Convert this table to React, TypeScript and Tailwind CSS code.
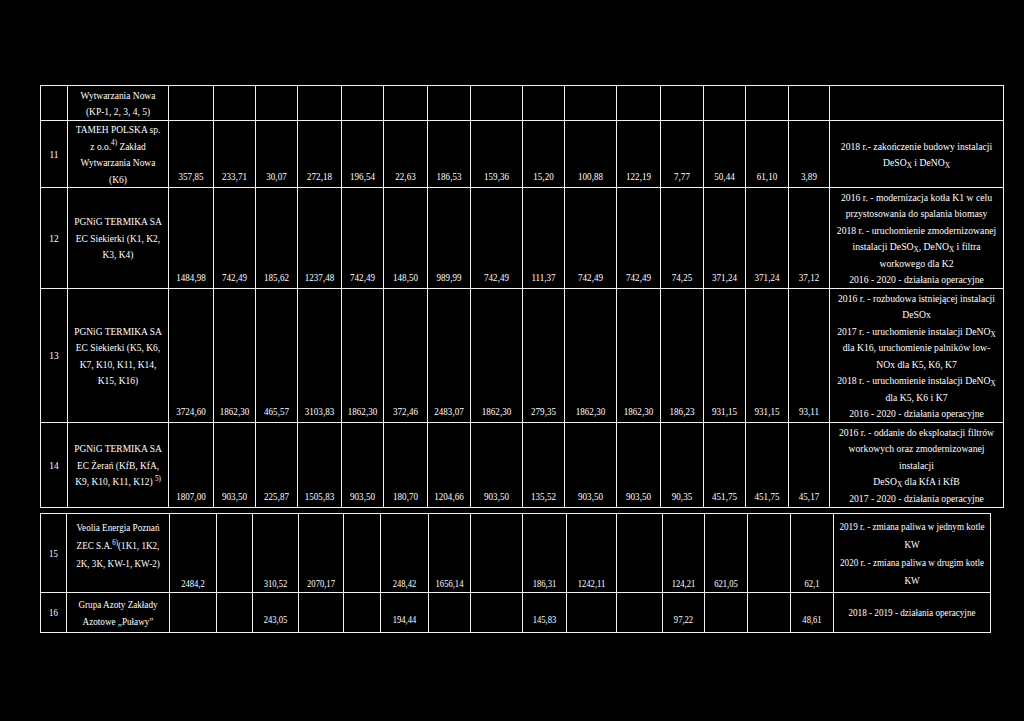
import type { ReactNode } from "react";

type Line = ReactNode;

const X = <sub>X</sub>;

const topCols = [
  "w-[27px]", "w-[101px]", "w-[45px]", "w-[42px]", "w-[42px]", "w-[44px]",
  "w-[42px]", "w-[44px]", "w-[43px]", "w-[52px]", "w-[42px]", "w-[52px]",
  "w-[44px]", "w-[43px]", "w-[42px]", "w-[43px]", "w-[41px]", "w-[174px]",
];

const bottomCols = [
  "w-[26px]", "w-[103px]", "w-[47px]", "w-[36px]", "w-[46px]", "w-[45px]",
  "w-[37px]", "w-[48px]", "w-[42px]", "w-[52px]", "w-[44px]", "w-[50px]",
  "w-[46px]", "w-[42px]", "w-[43px]", "w-[43px]", "w-[43px]", "w-[157px]",
];

const topRows: { lp: string; h: string; name: Line[]; nums: string[]; desc: Line[] }[] = [
  {
    lp: "",
    h: "h-[35px]",
    name: ["Wytwarzania Nowa", "(KP-1, 2, 3, 4, 5)"],
    nums: Array(15).fill(""),
    desc: [],
  },
  {
    lp: "11",
    h: "h-[67px]",
    name: [
      "TAMEH POLSKA sp.",
      <>z o.o.<sup>4)</sup> Zakład</>,
      "Wytwarzania Nowa",
      "(K6)",
    ],
    nums: ["357,85", "233,71", "30,07", "272,18", "196,54", "22,63", "186,53", "159,36", "15,20", "100,88", "122,19", "7,77", "50,44", "61,10", "3,89"],
    desc: [
      "2018 r.- zakończenie budowy instalacji",
      <>DeSO{X} i DeNO{X}</>,
    ],
  },
  {
    lp: "12",
    h: "h-[101px]",
    name: ["PGNiG TERMIKA SA", "EC Siekierki (K1, K2,", "K3, K4)"],
    nums: ["1484,98", "742,49", "185,62", "1237,48", "742,49", "148,50", "989,99", "742,49", "111,37", "742,49", "742,49", "74,25", "371,24", "371,24", "37,12"],
    desc: [
      "2016 r. - modernizacja kotła K1 w celu",
      "przystosowania do spalania biomasy",
      "2018 r. - uruchomienie zmodernizowanej",
      <>instalacji DeSO{X}, DeNO{X} i filtra</>,
      "workowego dla K2",
      "2016 - 2020 - działania operacyjne",
    ],
  },
  {
    lp: "13",
    h: "h-[134px]",
    name: ["PGNiG TERMIKA SA", "EC Siekierki (K5, K6,", "K7, K10, K11, K14,", "K15, K16)"],
    nums: ["3724,60", "1862,30", "465,57", "3103,83", "1862,30", "372,46", "2483,07", "1862,30", "279,35", "1862,30", "1862,30", "186,23", "931,15", "931,15", "93,11"],
    desc: [
      "2016 r. - rozbudowa istniejącej instalacji",
      "DeSOx",
      <>2017 r. - uruchomienie instalacji DeNO{X}</>,
      "dla K16, uruchomienie palników low-",
      "NOx dla K5, K6, K7",
      <>2018 r. - uruchomienie instalacji DeNO{X}</>,
      "dla K5, K6 i K7",
      "2016 - 2020 - działania operacyjne",
    ],
  },
  {
    lp: "14",
    h: "h-[85px]",
    name: [
      "PGNiG TERMIKA SA",
      "EC Żerań (KfB, KfA,",
      <>K9, K10, K11, K12) <sup>5)</sup></>,
    ],
    nums: ["1807,00", "903,50", "225,87", "1505,83", "903,50", "180,70", "1204,66", "903,50", "135,52", "903,50", "903,50", "90,35", "451,75", "451,75", "45,17"],
    desc: [
      "2016 r. - oddanie do eksploatacji filtrów",
      "workowych oraz zmodernizowanej",
      "instalacji",
      <>DeSO{X} dla KfA i KfB</>,
      "2017 - 2020 - działania operacyjne",
    ],
  },
];

const cell = "border border-[#f0f0f0] p-0";

function Lines({ lines, scale }: { lines: Line[]; scale: string }) {
  return (
    <div className={`flex flex-col items-center ${scale}`}>
      {lines.map((l, i) => (
        <div key={i} className="whitespace-nowrap">
          {l}
        </div>
      ))}
    </div>
  );
}

function TopTable() {
  return (
    <table className="w-[963px] table-fixed border-collapse text-[11px] leading-[16.5px]">
      <colgroup>
        {topCols.map((c, i) => (
          <col key={i} className={c} />
        ))}
      </colgroup>
      <tbody>
        {topRows.map((r, i) => (
          <tr key={i} className={r.h}>
            <td className={`${cell} align-middle`}>
              <Lines lines={r.lp ? [r.lp] : []} scale="scale-x-[0.85]" />
            </td>
            <td className={`${cell} align-middle`}>
              <Lines lines={r.name} scale="scale-x-[0.86]" />
            </td>
            {r.nums.map((n, j) => (
              <td key={j} className={`${cell} align-bottom pb-[3px]`}>
                <Lines lines={n ? [n] : []} scale="scale-x-[0.82]" />
              </td>
            ))}
            <td className={`${cell} align-middle`}>
              <Lines lines={r.desc} scale="scale-x-[0.88]" />
            </td>
          </tr>
        ))}
      </tbody>
    </table>
  );
}

const row15 = ["2484,2", "", "310,52", "2070,17", "", "248,42", "1656,14", "", "186,31", "1242,11", "", "124,21", "621,05", "", "62,1"];
const row16 = ["", "", "243,05", "", "", "194,44", "", "", "145,83", "", "", "97,22", "", "", "48,61"];

function BottomTable() {
  return (
    <table className="w-[950px] table-fixed border-collapse text-[11px]">
      <colgroup>
        {bottomCols.map((c, i) => (
          <col key={i} className={c} />
        ))}
      </colgroup>
      <tbody>
        <tr className="h-[79px]">
          <td className={`${cell} align-middle leading-[18px]`}>
            <Lines lines={["15"]} scale="scale-x-[0.8]" />
          </td>
          <td className={`${cell} align-top pt-[4px] leading-[18px]`}>
            <Lines
              lines={[
                "Veolia Energia Poznań",
                <>ZEC S.A.<sup>6)</sup>(1K1, 1K2,</>,
                "2K, 3K, KW-1, KW-2)",
              ]}
              scale="scale-x-[0.83]"
            />
          </td>
          {row15.map((n, j) => (
            <td key={j} className={`${cell} align-bottom pb-[1px] leading-[16px]`}>
              <Lines lines={n ? [n] : []} scale="scale-x-[0.78]" />
            </td>
          ))}
          <td className={`${cell} align-middle leading-[18px]`}>
            <Lines
              lines={[
                "2019 r. - zmiana paliwa w jednym kotle",
                "KW",
                "2020 r. - zmiana paliwa w drugim kotle",
                "KW",
              ]}
              scale="scale-x-[0.83]"
            />
          </td>
        </tr>
        <tr className="h-[40px]">
          <td className={`${cell} align-middle leading-[17px]`}>
            <Lines lines={["16"]} scale="scale-x-[0.8]" />
          </td>
          <td className={`${cell} align-middle leading-[17px]`}>
            <Lines lines={["Grupa Azoty Zakłady", "Azotowe „Puławy”"]} scale="scale-x-[0.83]" />
          </td>
          {row16.map((n, j) => (
            <td key={j} className={`${cell} align-bottom pb-[5px] leading-[16px]`}>
              <Lines lines={n ? [n] : []} scale="scale-x-[0.78]" />
            </td>
          ))}
          <td className={`${cell} align-middle leading-[17px]`}>
            <Lines lines={["2018 - 2019 - działania operacyjne"]} scale="scale-x-[0.83]" />
          </td>
        </tr>
      </tbody>
    </table>
  );
}

export default function App() {
  return (
    <div className="min-h-[721px] w-full overflow-hidden bg-black text-white [font-family:'Liberation_Serif','Times_New_Roman',serif]">
      <div className="pl-[40px] pt-[85px]">
        <TopTable />
      </div>
      <div className="pl-[40px] pt-[5px]">
        <BottomTable />
      </div>
    </div>
  );
}
